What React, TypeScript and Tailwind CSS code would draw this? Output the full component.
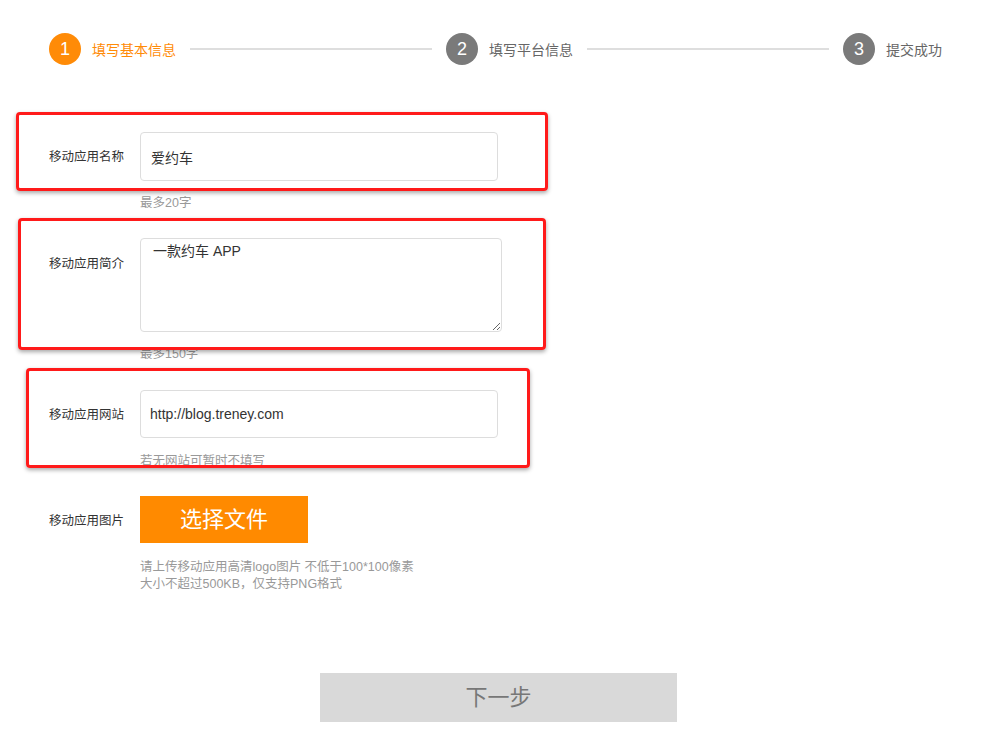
import React from "react";

const FONT = '"Helvetica Neue", "Liberation Sans", Arial, "Noto Sans CJK SC", sans-serif';

function Step({ n, label, active }: { n: number; label: string; active?: boolean }) {
  return (
    <div className="flex items-center shrink-0">
      <div
        className={`w-[32px] h-[32px] rounded-full flex items-center justify-center text-white text-[18px] ${
          active ? "bg-[#ff8b07]" : "bg-[#7a7a7a]"
        }`}
      >
        {n}
      </div>
      <span className={`ml-[11px] text-[14px] leading-[20px] mt-[2px] ${active ? "text-[#ff8b07]" : "text-[#666]"}`}>{label}</span>
    </div>
  );
}

function Line() {
  return <div className="flex-1 h-[2px] bg-[#dedede] mx-[14px]" />;
}

export default function App() {
  return (
    <div className="relative w-[1000px] h-[755px] bg-white overflow-hidden" style={{ fontFamily: FONT }}>
      {/* Stepper */}
      <div className="flex items-center mt-[33px] ml-[49px] w-[893px]">
        <Step n={1} label="填写基本信息" active />
        <Line />
        <Step n={2} label="填写平台信息" />
        <Line />
        <Step n={3} label="提交成功" />
      </div>

      {/* Form */}
      <div className="ml-[49px] mt-[67px]">
        <div className="flex items-center">
          <div className="w-[91px] text-[12.5px] text-[#333] pt-[2px]">移动应用名称</div>
          <input
            readOnly
            value="爱约车"
            className="w-[358px] h-[49px] border border-[#ddd] rounded-[4px] px-[10px] text-[14px] text-[#333] outline-none"
            style={{ fontFamily: FONT }}
          />
        </div>
        <div className="ml-[91px] mt-[14px] text-[12.5px] leading-[16px] text-[#999]">最多20字</div>

        <div className="flex items-start mt-[27px]">
          <div className="w-[91px] text-[12.5px] text-[#333] pt-[17px]">移动应用简介</div>
          <textarea
            readOnly
            value="一款约车 APP"
            className="w-[362px] h-[94px] border border-[#ddd] rounded-[4px] px-[12px] pt-[2px] text-[14px] text-[#333] outline-none"
            style={{ fontFamily: FONT }}
          />
        </div>
        <div className="ml-[91px] mt-[14px] text-[12.5px] leading-[16px] text-[#999]">最多150字</div>

        <div className="flex items-center mt-[28px]">
          <div className="w-[91px] text-[12.5px] text-[#333] pt-[2px]">移动应用网站</div>
          <input
            readOnly
            value="http://blog.treney.com"
            className="w-[358px] h-[48px] border border-[#ddd] rounded-[4px] px-[9px] text-[14px] text-[#333] outline-none"
            style={{ fontFamily: FONT }}
          />
        </div>
        <div className="ml-[91px] mt-[15px] text-[12.5px] leading-[16px] text-[#999]">若无网站可暂时不填写</div>

        <div className="flex items-center mt-[27px]">
          <div className="w-[91px] text-[12.5px] text-[#333] pt-[4px]">移动应用图片</div>
          <div className="w-[168px] h-[47px] bg-[#ff8a00] flex items-center justify-center text-white text-[22px]">
            选择文件
          </div>
        </div>
        <div className="ml-[91px] mt-[16px] text-[12.5px] leading-[17px] text-[#999]">
          <div>请上传移动应用高清logo图片 不低于100*100像素</div>
          <div>大小不超过500KB，仅支持PNG格式</div>
        </div>
      </div>

      <div className="ml-[320px] mt-[80px] w-[357px] h-[49px] bg-[#d9d9d9] flex items-center justify-center text-[22px] text-[#777]">
        下一步
      </div>

      {/* Red annotation boxes */}
      <div className="absolute left-[16px] top-[112px] w-[532px] h-[79px] border-[3px] border-[#ff1a1a] rounded-[4px] shadow-[0_2px_4px_rgba(0,0,0,0.35)]" />
      <div className="absolute left-[18px] top-[218px] w-[528px] h-[132px] border-[3px] border-[#ff1a1a] rounded-[4px] shadow-[0_2px_4px_rgba(0,0,0,0.35)]" />
      <div className="absolute left-[26px] top-[368px] w-[504px] h-[100px] border-[3px] border-[#ff1a1a] rounded-[4px] shadow-[0_2px_4px_rgba(0,0,0,0.35)]" />
    </div>
  );
}
